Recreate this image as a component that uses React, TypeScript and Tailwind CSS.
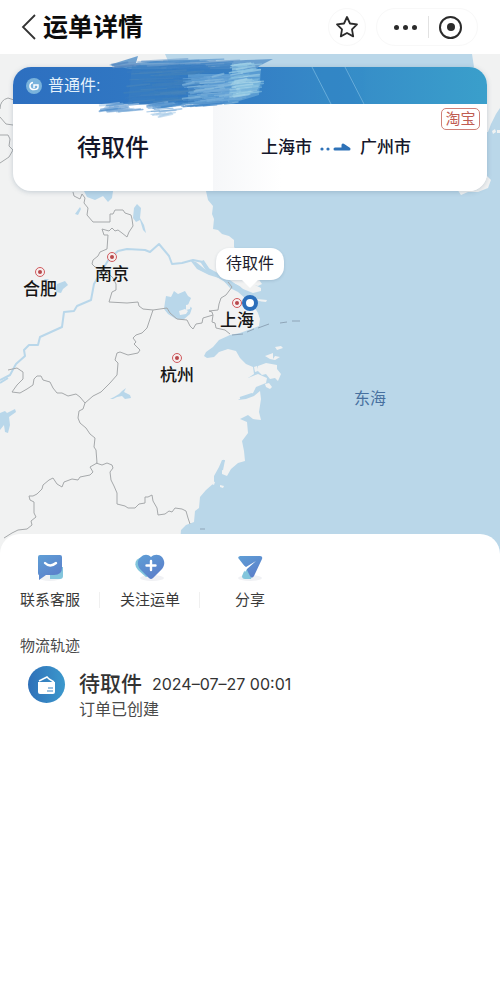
import type { ReactNode } from "react";

type City = { name: string; x: number; y: number };

const MAP_WIDTH = 500;

const cities: City[] = [
  { name: "合肥", x: 40, y: 218 },
  { name: "南京", x: 112, y: 203 },
  { name: "上海", x: 237, y: 249 },
  { name: "杭州", x: 177, y: 304 },
];

// x range, y range, stroke length, colors
const scribbles = [
  { x: [108, 124], y: [64, 68], len: [14, 26], n: 8, colors: ["#6f97c6", "#4d83c0"] },
  { x: [136, 205], y: [61, 69], len: [30, 62], n: 26, colors: ["#6c9dcd", "#3f82c3", "#4a8cc9"] },
  { x: [122, 180], y: [66, 104], len: [18, 46], n: 70, colors: ["#4080bb", "#3b7dc0", "#4a85ba", "#3479c2"] },
  { x: [182, 225], y: [76, 105], len: [8, 30], n: 110, colors: ["#8fbfe0", "#6ba7d8", "#76aedb", "#5797d0"] },
  { x: [229, 242], y: [65, 97], len: [10, 22], n: 90, colors: ["#9ccde5", "#8cc4e2", "#a9d5ea", "#7bb8dc"] },
  { x: [97, 120], y: [105, 112], len: [12, 26], n: 26, colors: ["#7fabd8", "#4f8ecb", "#a9c9e6"] },
  { x: [146, 165], y: [104, 112], len: [12, 26], n: 26, colors: ["#5b98cf", "#84b2dc", "#3f86c8"] },
  { x: [150, 160], y: [113, 117], len: [8, 20], n: 6, colors: ["#a9cbe8"] },
  { x: [180, 208], y: [103, 107], len: [16, 26], n: 14, colors: ["#5b98cf", "#3f86c8"] },
];

function rand(seed: number) {
  const v = Math.sin(seed * 127.1) * 43758.5453;
  return v - Math.floor(v);
}

function Scribble() {
  const lines: ReactNode[] = [];
  scribbles.forEach((s, g) => {
    for (let i = 0; i < s.n; i++) {
      const k = g * 500 + i * 4 + 1;
      const x = s.x[0] + rand(k) * (s.x[1] - s.x[0]);
      const y = s.y[0] + rand(k + 1) * (s.y[1] - s.y[0]);
      const len = s.len[0] + rand(k + 2) * (s.len[1] - s.len[0]);
      lines.push(
        <path
          key={k}
          d={`M${x} ${y}l${len} ${-1 - rand(k + 3) * 2}`}
          stroke={s.colors[i % s.colors.length]}
          strokeWidth={0.8 + rand(k + 3) * 1.2}
          opacity={0.6}
        />,
      );
    }
  });
  return (
    <svg
      className="pointer-events-none absolute top-[-13px] left-[77px]"
      width="190"
      height="66"
      viewBox="90 54 190 66"
      fill="none"
      strokeLinecap="round"
      aria-hidden="true"
    >
      <path d="M109 65l29-9-2 7 20-2 40 2 50-3 27-1-14 7-2 3H130z" fill="#5c95ca" opacity=".85" />
      <path d="M132 65l100-2v9l-52 3-2 29-50 1z" fill="#3b7fc0" opacity=".6" />
      <path d="M188 74h44v-6l29 1-2 26-30 9h-41z" fill="#79b2dc" opacity=".55" />
      {lines}
    </svg>
  );
}

function MapArt() {
  return (
    <svg
      className="absolute inset-0 h-full w-full"
      viewBox="0 54 500 500"
      preserveAspectRatio="none"
      fill="none"
      aria-hidden="true"
    >
      <rect y="54" width="500" height="500" fill="#bad7e9" />
      {/* mainland */}
      <path
        d="M0 54H165L185 100L200 160L206 191L208 200L213 206L212 214L214 219L213 229L218 230L222 234L229 236L234 240L234 247L240 255L252 270L262 284L258 286L247 283L240 286L228 281L216 276L206 270L196 262L190 260L197 269L209 275L222 279L230 288L238 292L246 299L253 305L258 313L260 319L259 326L251 329L240 333L230 335L219 340L213 347L206 352L204 356L207 358L214 357L219 352L228 349L236 351L240 358L246 364L253 367L254 374L248 378L258 374L267 378L266 383L256 387L253 393L245 396L238 400L246 399L254 396L260 391L261 399L259 412L261 420L253 419L248 415L240 419L247 422L248 433L242 441L244 451L245 461L238 463L231 469L227 476L222 474L222 467L225 460L222 460L219 467L214 476L214 483L206 490L200 497L199 508L195 511L194 522L186 525L181 530L179 554H0Z"
        fill="#f1f2f2"
      />
      <g fill="#f1f2f2">
        <path d="M472 54H500V108L496 114L491 124L488 132H470L476 80Z" />
        <path d="M457 189L462 180L487 176L491 180L488 188L478 192L468 192L461 195Z" />
        <path d="M492 131l3-2 1 3-3 2zM497 130h3v3h-3z" />
        <path d="M236 283L249 282L261 288L261 291L253 293L243 289Z" />
        <path d="M257 299L267 300L266 302L257 301Z" />
        <path d="M275 347l6-1 2 2-6 2zM265 356l8-3v6l2-3 5 1-5 3-5-1z" />
        <path d="M258 366l8-3 11 2v4l4 5-3 7-3-3-5 1-4-5-4 1-5-5z" />
        <path d="M265 384l4-1 3 4-2 2-4-2zM254 367l3-1 1 5-3 1z" />
        <path d="M220 485l4 1-1 2-3-1zM212 481l3 1-1 3-2-1z" />
      </g>
      {/* lakes */}
      <g fill="#b9d7ea">
        <path d="M166 296l5 1 3-6 4 3 7-3 3 5 3 2-3 7 4 3-2 6-7 6-7-1-8-5-4-5 1-7z" />
        <path d="M84 191h29l-1 7-4 4-5-6-8 4-8-3z" />
        <path d="M134 208l3-4 4 4-1 10 4 7 2 8-3-3-3-10-4 2-3-4z" />
        <path d="M57 284l8-3 3 4-5 4-2 4-5-1zM44 279h5l-3 3zM75 214l5-7 1 2-3 6z" />
        <path d="M0 413l5-2 2 2 8-4 1 3-7 5 1 8-2 8-3-1-1-7-4 5z" />
        <path d="M110 399l4-2 5-3 3-3 4-3-2 4 6 3 1 3-6 1-3-3-5 1-4 2z" />
      </g>
      <path d="M179 311l6-2 3 2-2 3-6 1zM186 305l5-1-1 5-4 1z" fill="#f1f2f2" />
      {/* Yangtze */}
      <g stroke="#b9d7ea" strokeLinejoin="round">
        <path
          strokeWidth="2"
          d="M0 380L10 375L16 364L25 356L24 350L29 345L38 345L40 337L62 327L64 312L74 311L77 306L91 300L94 284L101 272L109 259L118 251L127 249L145 250L150 252L159 244L169 256L172 264L182 263L193 260L203 262"
        />
        <path strokeWidth="4" d="M202 261L208 270L219 276L229 282L239 289L250 297" />
        <path strokeWidth="2" d="M253 300L261 303M0 383L8 378M240 398l12-4M224 460l-2 10" />
      </g>
      {/* province borders */}
      <g stroke="#a6a9ab" strokeWidth="1" strokeLinejoin="round">
        <path d="M0 109q0-9 8-11l6 2M0 117l6 7 7 1M0 135h8l2 4-1 7 4 4-4 7-9 6" />
        <path d="M73 192L74 196L80 199L82 194L85 198L84 203L88 208L87 215L93 222L110 222L110 214L113 214L115 210L123 210L125 213L131 215L132 219L133 226L129 232L127 237L122 233L118 230L115 231L112 228L109 231L102 229L104 235L108 235L107 249L100 252L98 256L93 260L92 264L95 267L105 270L113 278L116 284L116 290L112 292L109 302L127 303L138 302L139 306L143 309L153 310L167 308L170 313L177 319L187 320L190 326L193 329L196 324L202 323L203 318L213 315L212 312L209 311L218 310L219 304L221 298L226 295L232 287L228 282" />
        <path d="M213 315L212 322L215 323L216 328L225 330L230 334" />
        <path d="M153 310L150 319L147 328L142 333L136 335L133 338L136 342L134 344L140 350L138 353L128 355L120 352L117 353L115 360L118 363L117 375L110 383L101 392L93 396L85 403L80 397L76 394L68 396L62 393L57 393L53 388L50 382L43 380L41 376L37 376L34 379L33 385L27 389L20 393L12 392L17 385L23 379L23 372L17 368L8 370" />
        <path d="M85 403L83 409L79 411L78 418L80 423L86 428L90 434L95 438L94 447L96 450L97 463L90 467L93 472L90 475L80 477L78 480L72 479L64 482L62 487L57 484L53 478L49 480L43 485L42 489L37 494L33 496L29 496L30 500L34 502L34 513L36 517L31 521L32 525L27 529L18 530L12 533L4 538" />
        <path d="M96 463L102 465L107 463L112 465L113 468L110 472L111 480L114 486L117 493L117 504L125 506L128 508L135 508L139 504L145 503L145 497L148 497L152 495L153 501L157 508L158 515L165 514L169 511L172 512L175 508L182 509L186 511L188 518L190 524" />
      </g>
      <path
        d="M232 335l11-1M247 332l7-3M258 328l11-4M280 323l7-1M292 321h8M200 529h5"
        stroke="#8fa5b8"
      />
    </svg>
  );
}

function CityPin({ city }: { city: City }) {
  return (
    <div
      className="absolute flex w-12 -translate-x-1/2 flex-col items-center"
      style={{ left: `${(city.x / MAP_WIDTH) * 100}%`, top: city.y - 5 }}
    >
      <span className="flex size-[10px] items-center justify-center rounded-full border border-[#cf5a5e] bg-[#f7eeee]">
        <span className="size-1 rounded-full bg-[#b8484c]" />
      </span>
      <span className="pt-px text-[17px] leading-6 font-medium text-[#151515]">{city.name}</span>
    </div>
  );
}

function ServiceIcon() {
  return (
    <svg width="30" height="28" viewBox="0 0 30 28" aria-hidden="true">
      <ellipse cx="15" cy="24" rx="11" ry="3" fill="#f0f1f4" />
      <path d="M15 13h13v9q0 3-3 3H15z" fill="#82c5dc" />
      <path
        d="M5 1h20q2 0 2 2v11q0 7-8 7h-8l-7 5v-5q-1 0-1-2V3q0-2 2-2z"
        fill="url(#iconBlue)"
      />
      <path d="M10 9q5 5 11 0" fill="none" stroke="#fff" strokeWidth="2.4" strokeLinecap="round" />
    </svg>
  );
}

function FollowIcon() {
  return (
    <svg width="30" height="28" viewBox="0 0 30 28" aria-hidden="true">
      <ellipse cx="17" cy="24" rx="12" ry="3" fill="#f0f1f4" />
      <path d="M9 3q-5 0-8 4-2 5 2 9l8 7 8-2V5z" fill="#82c5dc" />
      <path
        d="M16 3c3-3 8-3 11 0 3 4 3 8 0 12l-9 9q-2 2-4 0l-9-9C2 11 2 6 6 3c3-3 7-3 10 0z"
        fill="url(#iconBlue)"
      />
      <path d="M16 7v9M11.5 11.5h9" stroke="#fff" strokeWidth="2.4" strokeLinecap="round" />
    </svg>
  );
}

function ShareIcon() {
  return (
    <svg width="30" height="28" viewBox="0 0 30 28" aria-hidden="true">
      <ellipse cx="15" cy="24" rx="12" ry="3" fill="#f0f1f4" />
      <path d="M11 13l-4 9q0 3 3 3h6l3-9z" fill="#82c5dc" />
      <path
        d="M5 2h20q3 0 2 3L19 22q-2 3-4 0l-4-8L4 5q-2-2 1-3z"
        fill="url(#iconBlue)"
      />
      <path d="M5 9l6 4 10-6-9 8-2 3z" fill="#fff" />
    </svg>
  );
}

const actions = [
  { label: "联系客服", icon: <ServiceIcon /> },
  { label: "关注运单", icon: <FollowIcon /> },
  { label: "分享", icon: <ShareIcon /> },
];

function Header() {
  return (
    <header className="flex h-[54px] items-center justify-between bg-white pr-[22px] pl-5">
      <div className="flex items-center gap-1.5">
        <button type="button" aria-label="返回">
          <svg width="17" height="26" viewBox="0 0 17 26" fill="none" aria-hidden="true">
            <path d="M15 1L3 13l12 12" stroke="#333" strokeWidth="1.8" />
          </svg>
        </button>
        <h1 className="text-[25px] leading-8 font-bold text-[#0c0c0c]">运单详情</h1>
      </div>
      <div className="flex items-center gap-2.5">
        <button
          type="button"
          aria-label="收藏"
          className="flex size-[38px] items-center justify-center rounded-full border border-[#f8f8f8]"
        >
          <svg width="24" height="24" viewBox="0 0 24 24" fill="none" aria-hidden="true">
            <path
              d="M12 2l3 6.5 7 .9-5 5 1.2 7L12 18l-6.200 3.400 1.200-7-5-5 7-.9z"
              stroke="#2b2b2b"
              strokeWidth="1.8"
              strokeLinejoin="round"
            />
          </svg>
        </button>
        <div className="flex h-[38px] w-[102px] items-center rounded-full border border-[#f8f8f8]">
          <button type="button" aria-label="更多" className="flex flex-1 items-center justify-center gap-1 pl-1.5">
            <span className="size-[5px] rounded-full bg-[#2b2b2b]" />
            <span className="size-[5px] rounded-full bg-[#2b2b2b]" />
            <span className="size-[5px] rounded-full bg-[#2b2b2b]" />
          </button>
          <span className="h-[22px] w-px bg-[#e2e2e2]" />
          <button type="button" aria-label="关闭" className="flex flex-1 items-center justify-center pr-1">
            <span className="flex size-[23px] items-center justify-center rounded-full border-2 border-[#2b2b2b]">
              <span className="size-2 rounded-full bg-[#2b2b2b]" />
            </span>
          </button>
        </div>
      </div>
    </header>
  );
}

function WaybillCard() {
  return (
    <section className="relative rounded-[18px] bg-white shadow-[0_1px_5px_rgba(60,90,120,0.25)]">
      <div className="relative flex h-[37px] items-center gap-1.5 overflow-hidden rounded-t-[18px] bg-linear-to-r from-[#2d6fc0] via-[#347fc5] to-[#3a9fcb] pl-[13px]">
        <svg className="absolute top-0 right-[120px]" width="60" height="37" viewBox="0 0 60 37" aria-hidden="true">
          <path d="M5 0h34l19 37H24z" fill="#2f80c4" opacity=".35" />
          <path d="M5 0l19 37M38 0l19 37" stroke="#7dbce2" opacity=".7" />
        </svg>
        <svg width="16" height="16" viewBox="0 0 16 16" fill="none" aria-hidden="true">
          <circle cx="8" cy="8" r="8" fill="#79b3dc" />
          <path
            d="M7 4.500Q3.500 5 4 9q.5 2.500 4 2.500 4 0 4-2.500V7H8v3"
            stroke="#fff"
            strokeWidth="1.5"
          />
        </svg>
        <span className="text-base leading-6 text-[#e3f1fb]">普通件:</span>
      </div>
      <div className="relative flex h-[87px] items-center overflow-hidden rounded-b-[18px]">
        <h2 className="w-[200px] text-center text-2xl leading-8 font-medium text-[#14162a]">待取件</h2>
        <div className="flex h-full flex-1 items-center bg-linear-to-r from-[#f6f7f9] to-white to-25% pl-12 text-[17px] leading-6 font-medium text-[#14162a]">
          <span>上海市</span>
          <svg className="mx-[7px]" width="34" height="12" viewBox="0 0 34 12" fill="none" aria-hidden="true">
            <circle cx="3" cy="7" r="1.6" fill="#2e72b8" />
            <circle cx="9" cy="7" r="1.6" fill="#2e72b8" />
            <path d="M16 7h14l-6-4v4z" fill="#2e72b8" stroke="#2e72b8" strokeWidth="3" strokeLinecap="round" strokeLinejoin="round" />
          </svg>
          <span>广州市</span>
        </div>
        <span className="absolute top-1 right-[7px] flex h-[22px] w-[39px] items-center justify-center rounded-[5px] border border-[#cf8078] text-[15px] leading-5 text-[#bf5c52]">
          淘宝
        </span>
      </div>
      <Scribble />
    </section>
  );
}

function RouteMap() {
  return (
    <div className="relative h-[500px] px-[13px] pt-[13px]">
      <MapArt />
      {cities.map((city) => (
        <CityPin key={city.name} city={city} />
      ))}
      <span className="absolute top-[333px] left-[74%] -translate-x-1/2 text-base leading-6 text-[#47709f]">
        东海
      </span>
      <span className="absolute top-[241px] left-1/2 size-4 -translate-x-1/2 rounded-full border-4 border-[#2c6fbb] bg-white" />
      <div className="absolute top-[194px] left-1/2 flex h-8 w-[68px] -translate-x-1/2 items-center justify-center rounded-[13px] bg-white text-base leading-6 text-[#1c1c2c] shadow-[0_1px_3px_rgba(60,90,120,0.2)]">
        待取件
        <svg className="absolute top-full" width="16" height="8" viewBox="0 0 16 8" aria-hidden="true">
          <path d="M0 0h16L8 8z" fill="#fff" />
        </svg>
      </div>
      <WaybillCard />
    </div>
  );
}

export default function App() {
  return (
    <div className="min-h-screen bg-white font-['Liberation_Sans','Noto_Sans_CJK_SC',sans-serif]">
      <svg className="absolute size-0" aria-hidden="true">
        <defs>
          <linearGradient id="iconBlue" x1="0" y1="0" x2="0.6" y2="1">
            <stop offset="0" stopColor="#5f9fd6" />
            <stop offset="1" stopColor="#5b7fca" />
          </linearGradient>
        </defs>
      </svg>
      <Header />
      <RouteMap />
      <main className="relative -mt-5 rounded-t-[20px] bg-white pt-5 pb-10">
        <nav className="grid w-3/5 grid-cols-3">
          {actions.map((action, i) => (
            <button
              key={action.label}
              type="button"
              className="relative flex flex-col items-center gap-1.5 text-[#3a3a3a]"
            >
              {action.icon}
              <span className="text-[15px] leading-6 whitespace-nowrap">{action.label}</span>
              {i < 2 && <span className="absolute right-0 bottom-1 h-4 w-px bg-[#f0f0f0]" />}
            </button>
          ))}
        </nav>
        <section className="px-5 pt-[22px]">
          <h2 className="text-[15px] leading-6 text-[#4a4a4a]">物流轨迹</h2>
          <ol className="pt-2 pl-2">
            <li className="flex items-start gap-3.5">
              <span className="flex size-[37px] items-center justify-center rounded-full bg-linear-to-r from-[#2f70b8] to-[#3c98cc]">
                <svg width="19" height="20" viewBox="0 0 19 20" aria-hidden="true">
                  <path d="M1 7h17v10q0 2-2 2H3q-2 0-2-2z" fill="#fff" />
                  <path d="M2 6l8-4 2 2 5 3" fill="none" stroke="#fff" strokeWidth="1.5" />
                  <path d="M11 13h5M10 16h6" stroke="#3c86c4" strokeWidth="1.2" />
                </svg>
              </span>
              <div className="pt-0.5">
                <p className="flex items-center gap-2.5">
                  <span className="text-[21px] leading-8 font-medium text-[#333]">待取件</span>
                  <time className="font-[Inter] text-base leading-8 text-[#333]">2024–07–27 00:01</time>
                </p>
                <p className="text-base leading-5 text-[#4a4a4a]">订单已创建</p>
              </div>
            </li>
          </ol>
        </section>
      </main>
    </div>
  );
}
